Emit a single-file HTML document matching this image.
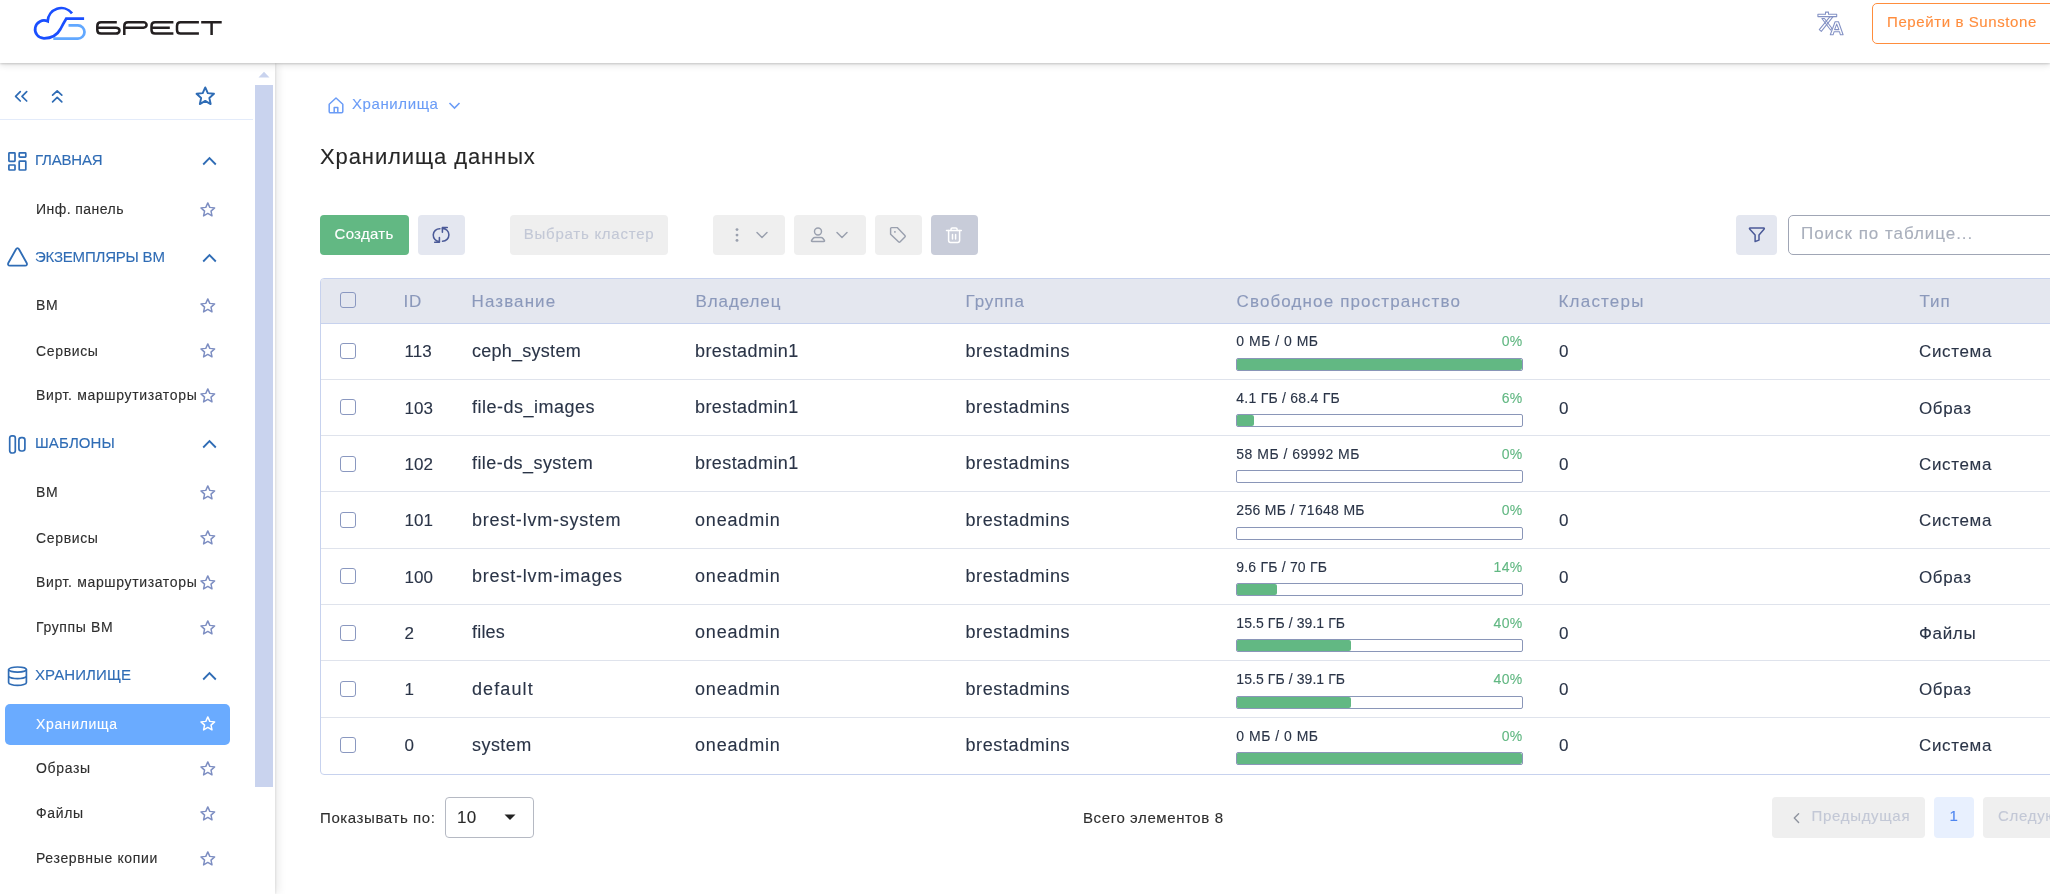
<!DOCTYPE html>
<html><head><meta charset="utf-8"><title>Хранилища данных</title>
<style>
html,body{margin:0;padding:0;}
body{width:2050px;height:894px;position:relative;overflow:hidden;background:#fff;font-family:"Liberation Sans", sans-serif;}
.t{position:absolute;white-space:pre;-webkit-text-stroke:0.12px currentColor;}
.r{position:absolute;}
</style></head><body>
<div id="w" style="position:absolute;left:0;top:0;width:2050px;height:894px;will-change:transform;">
<div class="r" style="left:0px;top:0px;width:2050px;height:63px;background:#fff;z-index:3;box-shadow:0 1px 2px rgba(0,0,0,0.16), 0 2px 7px rgba(0,0,0,0.12);"></div>
<svg class="r" style="left:30px;top:3px;z-index:4;" width="60" height="40" viewBox="0 0 60 40" fill="none"><path d="M38.5 22.4 H47.9 A6.6 6.6 0 0 1 47.9 35.6 H23.3" stroke="#62a8ff" stroke-width="2.7" fill="none"/><path d="M42 10.3 A13.6 13.6 0 0 0 17.7 18.3 A8.9 8.9 0 1 0 14 35.3 C22 35.3 27.5 31.5 30.5 26 C32.5 22 34.5 18.5 36.2 15.7 H54.1" stroke="#1a4fff" stroke-width="2.7" fill="none"/></svg>
<svg class="r" style="left:95px;top:20px;z-index:4;" width="128" height="16" viewBox="0 0 128 16" fill="none"><g stroke="#231f20" stroke-width="2.5" fill="none"><path d="M21.8 2.3 H6 C3.8 2.3 2.3 3.8 2.3 6 V10 C2.3 12.2 3.8 13.6 6 13.6 H21 C23 13.6 24.5 12.2 24.5 10.6 C24.5 9 23 7.7 21 7.7 H2.3"/><path d="M29.3 14.9 V6 C29.3 3.8 30.8 2.3 33 2.3 H48.5 C50.3 2.3 51.6 3.6 51.6 5 C51.6 6.4 50.3 7.7 48.5 7.7 H29.3"/><path d="M78.4 2.3 H60 C57.8 2.3 56.5 3.8 56.5 6 V10 C56.5 12.2 57.8 13.6 60 13.6 H78.4 M56.5 7.7 H74.8"/><path d="M103.9 2.3 H85.5 C83.3 2.3 82 3.8 82 6 V10 C82 12.2 83.3 13.6 85.5 13.6 H103.9"/><path d="M106.2 2.3 H126.7 M116.6 2.3 V14.9"/></g></svg>
<svg class="r" style="left:1812px;top:8px;z-index:4;" width="36" height="32" viewBox="0 0 36 32" fill="none"><g stroke="#8391c4" stroke-width="1.05" fill="none" stroke-linejoin="round"><path d="M5.9 6.2 H13.5 V4.1 H16.5 V6.2 H24.7 V8.6 H5.9 Z"/><path d="M18 8.6 H21.1 L9.3 23.4 L7.3 21.7 Z"/><path d="M9.9 10.5 H12.4 L19.9 20.2 L18.6 22 Z"/><path d="M18.3 26.8 L23.1 13.8 H26.5 L31.1 26.8 H28.4 L27.5 23.7 H22.1 L21.1 26.8 Z M22.6 21.6 H26.9 L24.7 16.1 Z"/></g></svg>
<div class="r" style="left:1872px;top:3px;width:190px;height:41px;border:1.5px solid #ff8d3d;border-radius:5px;box-sizing:border-box;background:#fff;z-index:4;"></div>
<div class="t" style="left:1887px;top:11.17px;font-size:15px;line-height:21px;color:#ff8d3d;letter-spacing:0.6px;font-weight:400;z-index:5;">Перейти в Sunstone</div>
<div class="r" style="left:0px;top:63px;width:275px;height:831px;background:#fff;z-index:2;box-shadow:1px 0 2px rgba(0,0,0,0.08), 3px 0 9px rgba(0,0,0,0.09);"></div>
<div class="r" style="left:255px;top:85px;width:18px;height:702px;background:#c9d3ee;z-index:2;"></div>
<svg class="r" style="left:258px;top:71px;z-index:2;" width="12" height="7" viewBox="0 0 12 7" fill="none"><path d="M0.5 6.5 L6 0.8 L11.5 6.5 Z" fill="#c9d3ee"/></svg>
<div class="r" style="left:0px;top:119px;width:253px;height:1px;background:#e3ebfa;z-index:2;"></div>
<svg class="r" style="left:10px;top:85px;z-index:2;" width="24" height="24" viewBox="0 0 24 24" fill="none"><path d="M10.3 6.6 L5.6 11.3 L10.3 16 M16.7 6.6 L12 11.3 L16.7 16" stroke="#2f6cb5" stroke-width="1.7" fill="none" stroke-linecap="round" stroke-linejoin="round"/></svg>
<svg class="r" style="left:45px;top:85px;z-index:2;" width="24" height="24" viewBox="0 0 24 24" fill="none"><path d="M7.6 10.2 L12.2 5.8 L16.8 10.2 M7.6 16.8 L12.2 12.3 L16.8 16.8" stroke="#2f6cb5" stroke-width="1.7" fill="none" stroke-linecap="round" stroke-linejoin="round"/></svg>
<svg class="r" style="left:194px;top:84.5px;z-index:2;" width="22.5" height="22.5" viewBox="0 0 24 24" fill="none"><path d="M12.00 2.60 L14.71 8.67 L21.32 9.37 L16.38 13.82 L17.76 20.33 L12.00 17.01 L6.24 20.33 L7.62 13.82 L2.68 9.37 L9.29 8.67 Z" stroke="#2f6cb5" stroke-width="2.05" stroke-linejoin="round" fill="none"/></svg>
<div class="t" style="left:35px;top:149.37px;font-size:15px;line-height:21px;color:#2f6cb5;letter-spacing:-0.2px;font-weight:400;z-index:2;">ГЛАВНАЯ</div>
<svg class="r" style="left:202px;top:156.2px;z-index:2;" width="15" height="10" viewBox="0 0 15 10" fill="none"><path d="M1.2 8.5 L7.5 2 L13.8 8.5" stroke="#2f6cb5" stroke-width="1.8" fill="none"/></svg>
<div class="t" style="left:35px;top:246.37px;font-size:15px;line-height:21px;color:#2f6cb5;letter-spacing:-0.2px;font-weight:400;z-index:2;">ЭКЗЕМПЛЯРЫ ВМ</div>
<svg class="r" style="left:202px;top:253.2px;z-index:2;" width="15" height="10" viewBox="0 0 15 10" fill="none"><path d="M1.2 8.5 L7.5 2 L13.8 8.5" stroke="#2f6cb5" stroke-width="1.8" fill="none"/></svg>
<div class="t" style="left:35px;top:432.07px;font-size:15px;line-height:21px;color:#2f6cb5;letter-spacing:0.1px;font-weight:400;z-index:2;">ШАБЛОНЫ</div>
<svg class="r" style="left:202px;top:438.9px;z-index:2;" width="15" height="10" viewBox="0 0 15 10" fill="none"><path d="M1.2 8.5 L7.5 2 L13.8 8.5" stroke="#2f6cb5" stroke-width="1.8" fill="none"/></svg>
<div class="t" style="left:35px;top:664.27px;font-size:15px;line-height:21px;color:#2f6cb5;letter-spacing:0.1px;font-weight:400;z-index:2;">ХРАНИЛИЩЕ</div>
<svg class="r" style="left:202px;top:671.1px;z-index:2;" width="15" height="10" viewBox="0 0 15 10" fill="none"><path d="M1.2 8.5 L7.5 2 L13.8 8.5" stroke="#2f6cb5" stroke-width="1.8" fill="none"/></svg>
<svg class="r" style="left:7px;top:151px;z-index:2;" width="21" height="21" viewBox="0 0 21 21" fill="none"><g stroke="#2f6cb5" stroke-width="1.7" fill="none"><rect x="1.9" y="1.9" width="6.1" height="8.5" rx="0.6"/><rect x="12.2" y="1.9" width="6.6" height="4.3" rx="0.6"/><rect x="1.9" y="14" width="6.1" height="5" rx="0.6"/><rect x="12.2" y="10.2" width="6.6" height="8.8" rx="0.6"/></g></svg>
<svg class="r" style="left:6px;top:246px;z-index:2;" width="23" height="22" viewBox="0 0 23 22" fill="none"><path d="M10 3.2 C10.8 1.8 12.2 1.8 13 3.2 L20.7 17 C21.5 18.5 20.8 19.7 19.1 19.7 L3.9 19.7 C2.2 19.7 1.5 18.5 2.3 17 Z" stroke="#2f6cb5" stroke-width="1.8" fill="none" stroke-linejoin="round"/></svg>
<svg class="r" style="left:7px;top:433px;z-index:2;" width="21" height="22" viewBox="0 0 21 22" fill="none"><g stroke="#2f6cb5" stroke-width="1.7" fill="none"><rect x="2.7" y="2.8" width="5.6" height="17.2" rx="2.2"/><rect x="11.9" y="4.7" width="6" height="13.3" rx="2.4"/></g></svg>
<svg class="r" style="left:7px;top:665px;z-index:2;" width="21" height="22" viewBox="0 0 21 22" fill="none"><g stroke="#2f6cb5" stroke-width="1.7" fill="none"><ellipse cx="10.5" cy="4.6" rx="8.9" ry="2.6"/><path d="M1.6 4.6 V17.4 C1.6 19 5.6 20.4 10.5 20.4 C15.4 20.4 19.4 19 19.4 17.4 V4.6"/><path d="M1.6 11.6 C3 12.7 6.5 13.6 10.5 13.6 C14.5 13.6 18 12.7 19.4 11.6"/></g></svg>
<div class="t" style="left:36px;top:199.06px;font-size:14px;line-height:20px;color:#2e2e2e;letter-spacing:0.45px;font-weight:400;z-index:2;">Инф. панель</div>
<svg class="r" style="left:199.2px;top:200.70000000000002px;z-index:2;" width="17.6" height="17.6" viewBox="0 0 24 24" fill="none"><path d="M12.00 2.60 L14.71 8.67 L21.32 9.37 L16.38 13.82 L17.76 20.33 L12.00 17.01 L6.24 20.33 L7.62 13.82 L2.68 9.37 L9.29 8.67 Z" stroke="#7d8ec2" stroke-width="2.0" stroke-linejoin="round" fill="none"/></svg>
<div class="t" style="left:36px;top:295.36px;font-size:14px;line-height:20px;color:#2e2e2e;letter-spacing:0.65px;font-weight:400;z-index:2;">ВМ</div>
<svg class="r" style="left:199.2px;top:297.0px;z-index:2;" width="17.6" height="17.6" viewBox="0 0 24 24" fill="none"><path d="M12.00 2.60 L14.71 8.67 L21.32 9.37 L16.38 13.82 L17.76 20.33 L12.00 17.01 L6.24 20.33 L7.62 13.82 L2.68 9.37 L9.29 8.67 Z" stroke="#7d8ec2" stroke-width="2.0" stroke-linejoin="round" fill="none"/></svg>
<div class="t" style="left:36px;top:340.56px;font-size:14px;line-height:20px;color:#2e2e2e;letter-spacing:0.65px;font-weight:400;z-index:2;">Сервисы</div>
<svg class="r" style="left:199.2px;top:342.2px;z-index:2;" width="17.6" height="17.6" viewBox="0 0 24 24" fill="none"><path d="M12.00 2.60 L14.71 8.67 L21.32 9.37 L16.38 13.82 L17.76 20.33 L12.00 17.01 L6.24 20.33 L7.62 13.82 L2.68 9.37 L9.29 8.67 Z" stroke="#7d8ec2" stroke-width="2.0" stroke-linejoin="round" fill="none"/></svg>
<div class="t" style="left:36px;top:385.36px;font-size:14px;line-height:20px;color:#2e2e2e;letter-spacing:0.65px;font-weight:400;z-index:2;">Вирт. маршрутизаторы</div>
<svg class="r" style="left:199.2px;top:387.0px;z-index:2;" width="17.6" height="17.6" viewBox="0 0 24 24" fill="none"><path d="M12.00 2.60 L14.71 8.67 L21.32 9.37 L16.38 13.82 L17.76 20.33 L12.00 17.01 L6.24 20.33 L7.62 13.82 L2.68 9.37 L9.29 8.67 Z" stroke="#7d8ec2" stroke-width="2.0" stroke-linejoin="round" fill="none"/></svg>
<div class="t" style="left:36px;top:482.36px;font-size:14px;line-height:20px;color:#2e2e2e;letter-spacing:0.65px;font-weight:400;z-index:2;">ВМ</div>
<svg class="r" style="left:199.2px;top:484.0px;z-index:2;" width="17.6" height="17.6" viewBox="0 0 24 24" fill="none"><path d="M12.00 2.60 L14.71 8.67 L21.32 9.37 L16.38 13.82 L17.76 20.33 L12.00 17.01 L6.24 20.33 L7.62 13.82 L2.68 9.37 L9.29 8.67 Z" stroke="#7d8ec2" stroke-width="2.0" stroke-linejoin="round" fill="none"/></svg>
<div class="t" style="left:36px;top:527.56px;font-size:14px;line-height:20px;color:#2e2e2e;letter-spacing:0.65px;font-weight:400;z-index:2;">Сервисы</div>
<svg class="r" style="left:199.2px;top:529.1999999999999px;z-index:2;" width="17.6" height="17.6" viewBox="0 0 24 24" fill="none"><path d="M12.00 2.60 L14.71 8.67 L21.32 9.37 L16.38 13.82 L17.76 20.33 L12.00 17.01 L6.24 20.33 L7.62 13.82 L2.68 9.37 L9.29 8.67 Z" stroke="#7d8ec2" stroke-width="2.0" stroke-linejoin="round" fill="none"/></svg>
<div class="t" style="left:36px;top:572.46px;font-size:14px;line-height:20px;color:#2e2e2e;letter-spacing:0.65px;font-weight:400;z-index:2;">Вирт. маршрутизаторы</div>
<svg class="r" style="left:199.2px;top:574.0999999999999px;z-index:2;" width="17.6" height="17.6" viewBox="0 0 24 24" fill="none"><path d="M12.00 2.60 L14.71 8.67 L21.32 9.37 L16.38 13.82 L17.76 20.33 L12.00 17.01 L6.24 20.33 L7.62 13.82 L2.68 9.37 L9.29 8.67 Z" stroke="#7d8ec2" stroke-width="2.0" stroke-linejoin="round" fill="none"/></svg>
<div class="t" style="left:36px;top:616.96px;font-size:14px;line-height:20px;color:#2e2e2e;letter-spacing:0.65px;font-weight:400;z-index:2;">Группы ВМ</div>
<svg class="r" style="left:199.2px;top:618.5999999999999px;z-index:2;" width="17.6" height="17.6" viewBox="0 0 24 24" fill="none"><path d="M12.00 2.60 L14.71 8.67 L21.32 9.37 L16.38 13.82 L17.76 20.33 L12.00 17.01 L6.24 20.33 L7.62 13.82 L2.68 9.37 L9.29 8.67 Z" stroke="#7d8ec2" stroke-width="2.0" stroke-linejoin="round" fill="none"/></svg>
<div class="r" style="left:5px;top:704px;width:225px;height:41px;background:#6aabff;border-radius:5px;z-index:2;"></div>
<div class="t" style="left:36px;top:713.66px;font-size:14px;line-height:20px;color:#fff;letter-spacing:0.65px;font-weight:400;z-index:2;">Хранилища</div>
<svg class="r" style="left:199.2px;top:715.3px;z-index:2;" width="17.6" height="17.6" viewBox="0 0 24 24" fill="none"><path d="M12.00 2.60 L14.71 8.67 L21.32 9.37 L16.38 13.82 L17.76 20.33 L12.00 17.01 L6.24 20.33 L7.62 13.82 L2.68 9.37 L9.29 8.67 Z" stroke="#fff" stroke-width="2.0" stroke-linejoin="round" fill="none"/></svg>
<div class="t" style="left:36px;top:758.36px;font-size:14px;line-height:20px;color:#2e2e2e;letter-spacing:0.65px;font-weight:400;z-index:2;">Образы</div>
<svg class="r" style="left:199.2px;top:760.0px;z-index:2;" width="17.6" height="17.6" viewBox="0 0 24 24" fill="none"><path d="M12.00 2.60 L14.71 8.67 L21.32 9.37 L16.38 13.82 L17.76 20.33 L12.00 17.01 L6.24 20.33 L7.62 13.82 L2.68 9.37 L9.29 8.67 Z" stroke="#7d8ec2" stroke-width="2.0" stroke-linejoin="round" fill="none"/></svg>
<div class="t" style="left:36px;top:803.36px;font-size:14px;line-height:20px;color:#2e2e2e;letter-spacing:0.65px;font-weight:400;z-index:2;">Файлы</div>
<svg class="r" style="left:199.2px;top:805.0px;z-index:2;" width="17.6" height="17.6" viewBox="0 0 24 24" fill="none"><path d="M12.00 2.60 L14.71 8.67 L21.32 9.37 L16.38 13.82 L17.76 20.33 L12.00 17.01 L6.24 20.33 L7.62 13.82 L2.68 9.37 L9.29 8.67 Z" stroke="#7d8ec2" stroke-width="2.0" stroke-linejoin="round" fill="none"/></svg>
<div class="t" style="left:36px;top:848.36px;font-size:14px;line-height:20px;color:#2e2e2e;letter-spacing:0.65px;font-weight:400;z-index:2;">Резервные копии</div>
<svg class="r" style="left:199.2px;top:850.0px;z-index:2;" width="17.6" height="17.6" viewBox="0 0 24 24" fill="none"><path d="M12.00 2.60 L14.71 8.67 L21.32 9.37 L16.38 13.82 L17.76 20.33 L12.00 17.01 L6.24 20.33 L7.62 13.82 L2.68 9.37 L9.29 8.67 Z" stroke="#7d8ec2" stroke-width="2.0" stroke-linejoin="round" fill="none"/></svg>
<svg class="r" style="left:326px;top:95px;" width="20" height="20" viewBox="0 0 20 20" fill="none"><path d="M3.2 9.2 L10 3 L16.8 9.2 V16.6 C16.8 17.3 16.3 17.8 15.6 17.8 H4.4 C3.7 17.8 3.2 17.3 3.2 16.6 Z M8.2 17.8 V12.5 H11.8 V17.8" stroke="#6b9cf6" stroke-width="1.5" fill="none" stroke-linejoin="round"/></svg>
<div class="t" style="left:352px;top:93.17px;font-size:15px;line-height:21px;color:#6b9cf6;letter-spacing:0.6px;font-weight:400;">Хранилища</div>
<svg class="r" style="left:448px;top:101px;" width="13" height="9" viewBox="0 0 13 9" fill="none"><path d="M1.5 2 L6.5 7 L11.5 2" stroke="#6b9cf6" stroke-width="1.6" fill="none"/></svg>
<div class="t" style="left:320px;top:141.25px;font-size:22px;line-height:31px;color:#262626;letter-spacing:0.9px;font-weight:400;">Хранилища данных</div>
<div class="r" style="left:320px;top:215px;width:89px;height:40px;background:#62b883;border-radius:4px;"></div>
<div class="t" style="left:334.5px;top:223.27px;font-size:15px;line-height:21px;color:#fff;letter-spacing:0.3px;font-weight:400;">Создать</div>
<div class="r" style="left:418px;top:215px;width:47px;height:40px;background:#e4e7f0;border-radius:4px;"></div>
<svg class="r" style="left:429px;top:222px;" width="24" height="24" viewBox="0 0 24 24" fill="none"><g stroke="#4b5a98" stroke-width="1.55" fill="none" stroke-linecap="round" stroke-linejoin="round"><path d="M10.9 6.7 A6.3 6.3 0 0 0 10.4 19.5"/><path d="M10.4 15.6 V20.3 H5.7"/><path d="M13.5 19.3 A6.3 6.3 0 0 0 13.4 6.4"/><path d="M13.4 10.2 V5.4 H18.3"/></g></svg>
<div class="r" style="left:510px;top:215px;width:158px;height:40px;background:#efefef;border-radius:4px;"></div>
<div class="t" style="left:523.8px;top:223.27px;font-size:15px;line-height:21px;color:#c3c8d6;letter-spacing:0.75px;font-weight:400;">Выбрать кластер</div>
<div class="r" style="left:713px;top:215px;width:72px;height:40px;background:#efefef;border-radius:4px;"></div>
<svg class="r" style="left:731px;top:225px;" width="12" height="20" viewBox="0 0 12 20" fill="none"><g fill="#9aa0ae"><circle cx="6" cy="4.6" r="1.45"/><circle cx="6" cy="10.1" r="1.45"/><circle cx="6" cy="15.4" r="1.45"/></g></svg>
<svg class="r" style="left:755px;top:228.8px;" width="14" height="12" viewBox="0 0 14 12" fill="none"><path d="M2 3.5 L7 8.5 L12 3.5" stroke="#9aa0ae" stroke-width="1.5" fill="none" stroke-linecap="round" stroke-linejoin="round"/></svg>
<div class="r" style="left:794px;top:215px;width:72px;height:40px;background:#efefef;border-radius:4px;"></div>
<svg class="r" style="left:808px;top:225px;" width="18" height="20" viewBox="0 0 18 20" fill="none"><g stroke="#9aa0ae" stroke-width="1.45" fill="none"><circle cx="10" cy="6.4" r="3.5"/><path d="M6.9 12.5 H13.1 C13.9 12.5 14.5 12.9 15 13.5 L16.3 15.2 C16.8 15.9 16.5 16.5 15.7 16.5 H4.3 C3.5 16.5 3.2 15.9 3.7 15.2 L5 13.5 C5.5 12.9 6.1 12.5 6.9 12.5 Z" stroke-linejoin="round"/></g></svg>
<svg class="r" style="left:835px;top:228.8px;" width="14" height="12" viewBox="0 0 14 12" fill="none"><path d="M2 3.5 L7 8.5 L12 3.5" stroke="#9aa0ae" stroke-width="1.5" fill="none" stroke-linecap="round" stroke-linejoin="round"/></svg>
<div class="r" style="left:875px;top:215px;width:47px;height:40px;background:#efefef;border-radius:4px;"></div>
<svg class="r" style="left:886px;top:224px;" width="22" height="22" viewBox="0 0 22 22" fill="none"><g stroke="#9aa0ae" stroke-width="1.45" fill="none" stroke-linejoin="round"><path d="M4.6 4.6 C4.6 4 5 3.6 5.6 3.6 H11.2 L18.9 11.4 C19.4 11.9 19.4 12.6 18.9 13.1 L14.2 17.8 C13.7 18.3 13 18.3 12.5 17.8 L4.6 10.2 Z"/></g><rect x="8.1" y="7.1" width="1.6" height="1.6" fill="#9aa0ae"/></svg>
<div class="r" style="left:931px;top:215px;width:47px;height:40px;background:#c8ccd9;border-radius:4px;"></div>
<svg class="r" style="left:943px;top:224px;" width="22" height="22" viewBox="0 0 22 22" fill="none"><g stroke="#fff" stroke-width="1.5" fill="none" stroke-linecap="round" stroke-linejoin="round"><path d="M3.5 6.4 H18.3"/><path d="M8 6.4 V5.2 C8 4.4 8.5 3.9 9.3 3.9 H12.8 C13.6 3.9 14.1 4.4 14.1 5.2 V6.4"/><path d="M5.6 6.6 V16.6 C5.6 17.7 6.3 18.4 7.4 18.4 H14.8 C15.9 18.4 16.6 17.7 16.6 16.6 V6.6"/><path d="M9.5 10.4 V14.9 M12.6 10.4 V14.9"/></g></svg>
<div class="r" style="left:1736px;top:215px;width:41px;height:40px;background:#e4e7f0;border-radius:4px;"></div>
<svg class="r" style="left:1746px;top:225px;" width="20" height="20" viewBox="0 0 20 20" fill="none"><path d="M4 3 H17.8 C18.3 3 18.5 3.5 18.2 3.9 L13 10.1 V15.1 L9.1 16.5 V10.1 L3.6 3.9 C3.3 3.5 3.5 3 4 3 Z" stroke="#4b5a98" stroke-width="1.5" fill="none" stroke-linejoin="round"/></svg>
<div class="r" style="left:1788px;top:215px;width:300px;height:40px;border:1px solid #a0a6b5;border-radius:5px;box-sizing:border-box;background:#fff;"></div>
<div class="t" style="left:1801px;top:221.70px;font-size:17px;line-height:24px;color:#a9afbc;letter-spacing:0.97px;font-weight:400;">Поиск по таблице...</div>
<div class="r" style="left:320px;top:278px;width:1800px;height:497px;border:1px solid #c7d2ee;border-radius:4px;box-sizing:border-box;background:#fff;"></div>
<div class="r" style="left:321px;top:279px;width:1800px;height:44px;background:#e4e7ef;border-bottom:1px solid #c7d2ee;border-top-left-radius:3px;"></div>
<div class="r" style="left:340px;top:292px;width:16px;height:16px;border:1.6px solid #8a98c0;border-radius:3px;box-sizing:border-box;"></div>
<div class="t" style="left:403.5px;top:289.70px;font-size:17px;line-height:24px;color:#8b99bb;letter-spacing:0.9px;font-weight:400;">ID</div>
<div class="t" style="left:471.5px;top:289.70px;font-size:17px;line-height:24px;color:#8b99bb;letter-spacing:1.1px;font-weight:400;">Название</div>
<div class="t" style="left:695.5px;top:289.70px;font-size:17px;line-height:24px;color:#8b99bb;letter-spacing:0.9px;font-weight:400;">Владелец</div>
<div class="t" style="left:965.5px;top:289.70px;font-size:17px;line-height:24px;color:#8b99bb;letter-spacing:0.9px;font-weight:400;">Группа</div>
<div class="t" style="left:1236.5px;top:289.70px;font-size:17px;line-height:24px;color:#8b99bb;letter-spacing:1.13px;font-weight:400;">Свободное пространство</div>
<div class="t" style="left:1558.5px;top:289.70px;font-size:17px;line-height:24px;color:#8b99bb;letter-spacing:1.2px;font-weight:400;">Кластеры</div>
<div class="t" style="left:1919.5px;top:289.70px;font-size:17px;line-height:24px;color:#8b99bb;letter-spacing:0.9px;font-weight:400;">Тип</div>
<div class="r" style="left:321px;top:379px;width:1800px;height:1px;background:#dfe3ec;"></div>
<div class="r" style="left:340px;top:343px;width:16px;height:16px;border:1.6px solid #8a98c0;border-radius:3px;box-sizing:border-box;"></div>
<div class="t" style="left:404.5px;top:340.35px;font-size:17px;line-height:24px;color:#2a3447;letter-spacing:0.1px;font-weight:400;">113</div>
<div class="t" style="left:472px;top:338.86px;font-size:18px;line-height:25px;color:#2a3447;letter-spacing:0.26px;font-weight:400;">ceph_system</div>
<div class="t" style="left:695px;top:338.86px;font-size:18px;line-height:25px;color:#2a3447;letter-spacing:0.42px;font-weight:400;">brestadmin1</div>
<div class="t" style="left:965.5px;top:338.86px;font-size:18px;line-height:25px;color:#2a3447;letter-spacing:0.6px;font-weight:400;">brestadmins</div>
<div class="t" style="left:1559px;top:340.35px;font-size:17px;line-height:24px;color:#2a3447;letter-spacing:0px;font-weight:400;">0</div>
<div class="t" style="left:1919px;top:340.35px;font-size:17px;line-height:24px;color:#2a3447;letter-spacing:0.65px;font-weight:400;">Система</div>
<div class="t" style="left:1236.3px;top:331.46px;font-size:14px;line-height:20px;color:#2a3447;letter-spacing:0.5px;font-weight:400;">0 МБ / 0 МБ</div>
<div class="t" style="right:527.5px;top:331.46px;font-size:14px;line-height:20px;color:#62b883;letter-spacing:0.3px;font-weight:400;">0%</div>
<div class="r" style="left:1236px;top:358px;width:287px;height:13px;border:1px solid #8a96b8;border-radius:2px;box-sizing:border-box;background:#fff;overflow:hidden;"></div>
<div class="r" style="left:1237px;top:359px;width:285px;height:11px;background:#62b883;border-radius:1px 2px 2px 1px;"></div>
<div class="r" style="left:321px;top:435px;width:1800px;height:1px;background:#dfe3ec;"></div>
<div class="r" style="left:340px;top:399px;width:16px;height:16px;border:1.6px solid #8a98c0;border-radius:3px;box-sizing:border-box;"></div>
<div class="t" style="left:404.5px;top:396.65px;font-size:17px;line-height:24px;color:#2a3447;letter-spacing:0.1px;font-weight:400;">103</div>
<div class="t" style="left:472px;top:395.16px;font-size:18px;line-height:25px;color:#2a3447;letter-spacing:0.5px;font-weight:400;">file-ds_images</div>
<div class="t" style="left:695px;top:395.16px;font-size:18px;line-height:25px;color:#2a3447;letter-spacing:0.42px;font-weight:400;">brestadmin1</div>
<div class="t" style="left:965.5px;top:395.16px;font-size:18px;line-height:25px;color:#2a3447;letter-spacing:0.6px;font-weight:400;">brestadmins</div>
<div class="t" style="left:1559px;top:396.65px;font-size:17px;line-height:24px;color:#2a3447;letter-spacing:0px;font-weight:400;">0</div>
<div class="t" style="left:1919px;top:396.65px;font-size:17px;line-height:24px;color:#2a3447;letter-spacing:0.65px;font-weight:400;">Образ</div>
<div class="t" style="left:1236.3px;top:387.76px;font-size:14px;line-height:20px;color:#2a3447;letter-spacing:0.25px;font-weight:400;">4.1 ГБ / 68.4 ГБ</div>
<div class="t" style="right:527.5px;top:387.76px;font-size:14px;line-height:20px;color:#62b883;letter-spacing:0.3px;font-weight:400;">6%</div>
<div class="r" style="left:1236px;top:414px;width:287px;height:13px;border:1px solid #8a96b8;border-radius:2px;box-sizing:border-box;background:#fff;overflow:hidden;"></div>
<div class="r" style="left:1237px;top:415px;width:17px;height:11px;background:#62b883;border-radius:1px 2px 2px 1px;"></div>
<div class="r" style="left:321px;top:491px;width:1800px;height:1px;background:#dfe3ec;"></div>
<div class="r" style="left:340px;top:456px;width:16px;height:16px;border:1.6px solid #8a98c0;border-radius:3px;box-sizing:border-box;"></div>
<div class="t" style="left:404.5px;top:452.95px;font-size:17px;line-height:24px;color:#2a3447;letter-spacing:0.1px;font-weight:400;">102</div>
<div class="t" style="left:472px;top:451.46px;font-size:18px;line-height:25px;color:#2a3447;letter-spacing:0.43px;font-weight:400;">file-ds_system</div>
<div class="t" style="left:695px;top:451.46px;font-size:18px;line-height:25px;color:#2a3447;letter-spacing:0.42px;font-weight:400;">brestadmin1</div>
<div class="t" style="left:965.5px;top:451.46px;font-size:18px;line-height:25px;color:#2a3447;letter-spacing:0.6px;font-weight:400;">brestadmins</div>
<div class="t" style="left:1559px;top:452.95px;font-size:17px;line-height:24px;color:#2a3447;letter-spacing:0px;font-weight:400;">0</div>
<div class="t" style="left:1919px;top:452.95px;font-size:17px;line-height:24px;color:#2a3447;letter-spacing:0.65px;font-weight:400;">Система</div>
<div class="t" style="left:1236.3px;top:444.06px;font-size:14px;line-height:20px;color:#2a3447;letter-spacing:0.5px;font-weight:400;">58 МБ / 69992 МБ</div>
<div class="t" style="right:527.5px;top:444.06px;font-size:14px;line-height:20px;color:#62b883;letter-spacing:0.3px;font-weight:400;">0%</div>
<div class="r" style="left:1236px;top:470px;width:287px;height:13px;border:1px solid #8a96b8;border-radius:2px;box-sizing:border-box;background:#fff;overflow:hidden;"></div>
<div class="r" style="left:321px;top:548px;width:1800px;height:1px;background:#dfe3ec;"></div>
<div class="r" style="left:340px;top:512px;width:16px;height:16px;border:1.6px solid #8a98c0;border-radius:3px;box-sizing:border-box;"></div>
<div class="t" style="left:404.5px;top:509.25px;font-size:17px;line-height:24px;color:#2a3447;letter-spacing:0.1px;font-weight:400;">101</div>
<div class="t" style="left:472px;top:507.76px;font-size:18px;line-height:25px;color:#2a3447;letter-spacing:0.77px;font-weight:400;">brest-lvm-system</div>
<div class="t" style="left:695px;top:507.76px;font-size:18px;line-height:25px;color:#2a3447;letter-spacing:0.83px;font-weight:400;">oneadmin</div>
<div class="t" style="left:965.5px;top:507.76px;font-size:18px;line-height:25px;color:#2a3447;letter-spacing:0.6px;font-weight:400;">brestadmins</div>
<div class="t" style="left:1559px;top:509.25px;font-size:17px;line-height:24px;color:#2a3447;letter-spacing:0px;font-weight:400;">0</div>
<div class="t" style="left:1919px;top:509.25px;font-size:17px;line-height:24px;color:#2a3447;letter-spacing:0.65px;font-weight:400;">Система</div>
<div class="t" style="left:1236.3px;top:500.36px;font-size:14px;line-height:20px;color:#2a3447;letter-spacing:0.3px;font-weight:400;">256 МБ / 71648 МБ</div>
<div class="t" style="right:527.5px;top:500.36px;font-size:14px;line-height:20px;color:#62b883;letter-spacing:0.3px;font-weight:400;">0%</div>
<div class="r" style="left:1236px;top:527px;width:287px;height:13px;border:1px solid #8a96b8;border-radius:2px;box-sizing:border-box;background:#fff;overflow:hidden;"></div>
<div class="r" style="left:321px;top:604px;width:1800px;height:1px;background:#dfe3ec;"></div>
<div class="r" style="left:340px;top:568px;width:16px;height:16px;border:1.6px solid #8a98c0;border-radius:3px;box-sizing:border-box;"></div>
<div class="t" style="left:404.5px;top:565.55px;font-size:17px;line-height:24px;color:#2a3447;letter-spacing:0.1px;font-weight:400;">100</div>
<div class="t" style="left:472px;top:564.06px;font-size:18px;line-height:25px;color:#2a3447;letter-spacing:0.8px;font-weight:400;">brest-lvm-images</div>
<div class="t" style="left:695px;top:564.06px;font-size:18px;line-height:25px;color:#2a3447;letter-spacing:0.83px;font-weight:400;">oneadmin</div>
<div class="t" style="left:965.5px;top:564.06px;font-size:18px;line-height:25px;color:#2a3447;letter-spacing:0.6px;font-weight:400;">brestadmins</div>
<div class="t" style="left:1559px;top:565.55px;font-size:17px;line-height:24px;color:#2a3447;letter-spacing:0px;font-weight:400;">0</div>
<div class="t" style="left:1919px;top:565.55px;font-size:17px;line-height:24px;color:#2a3447;letter-spacing:0.65px;font-weight:400;">Образ</div>
<div class="t" style="left:1236.3px;top:556.66px;font-size:14px;line-height:20px;color:#2a3447;letter-spacing:0.2px;font-weight:400;">9.6 ГБ / 70 ГБ</div>
<div class="t" style="right:527.5px;top:556.66px;font-size:14px;line-height:20px;color:#62b883;letter-spacing:0.3px;font-weight:400;">14%</div>
<div class="r" style="left:1236px;top:583px;width:287px;height:13px;border:1px solid #8a96b8;border-radius:2px;box-sizing:border-box;background:#fff;overflow:hidden;"></div>
<div class="r" style="left:1237px;top:584px;width:40px;height:11px;background:#62b883;border-radius:1px 2px 2px 1px;"></div>
<div class="r" style="left:321px;top:660px;width:1800px;height:1px;background:#dfe3ec;"></div>
<div class="r" style="left:340px;top:625px;width:16px;height:16px;border:1.6px solid #8a98c0;border-radius:3px;box-sizing:border-box;"></div>
<div class="t" style="left:404.5px;top:621.85px;font-size:17px;line-height:24px;color:#2a3447;letter-spacing:0.1px;font-weight:400;">2</div>
<div class="t" style="left:472px;top:620.36px;font-size:18px;line-height:25px;color:#2a3447;letter-spacing:0.2px;font-weight:400;">files</div>
<div class="t" style="left:695px;top:620.36px;font-size:18px;line-height:25px;color:#2a3447;letter-spacing:0.83px;font-weight:400;">oneadmin</div>
<div class="t" style="left:965.5px;top:620.36px;font-size:18px;line-height:25px;color:#2a3447;letter-spacing:0.6px;font-weight:400;">brestadmins</div>
<div class="t" style="left:1559px;top:621.85px;font-size:17px;line-height:24px;color:#2a3447;letter-spacing:0px;font-weight:400;">0</div>
<div class="t" style="left:1919px;top:621.85px;font-size:17px;line-height:24px;color:#2a3447;letter-spacing:0.65px;font-weight:400;">Файлы</div>
<div class="t" style="left:1236.3px;top:612.96px;font-size:14px;line-height:20px;color:#2a3447;letter-spacing:0.08px;font-weight:400;">15.5 ГБ / 39.1 ГБ</div>
<div class="t" style="right:527.5px;top:612.96px;font-size:14px;line-height:20px;color:#62b883;letter-spacing:0.3px;font-weight:400;">40%</div>
<div class="r" style="left:1236px;top:639px;width:287px;height:13px;border:1px solid #8a96b8;border-radius:2px;box-sizing:border-box;background:#fff;overflow:hidden;"></div>
<div class="r" style="left:1237px;top:640px;width:114px;height:11px;background:#62b883;border-radius:1px 2px 2px 1px;"></div>
<div class="r" style="left:321px;top:717px;width:1800px;height:1px;background:#dfe3ec;"></div>
<div class="r" style="left:340px;top:681px;width:16px;height:16px;border:1.6px solid #8a98c0;border-radius:3px;box-sizing:border-box;"></div>
<div class="t" style="left:404.5px;top:678.15px;font-size:17px;line-height:24px;color:#2a3447;letter-spacing:0.1px;font-weight:400;">1</div>
<div class="t" style="left:472px;top:676.66px;font-size:18px;line-height:25px;color:#2a3447;letter-spacing:1.1px;font-weight:400;">default</div>
<div class="t" style="left:695px;top:676.66px;font-size:18px;line-height:25px;color:#2a3447;letter-spacing:0.83px;font-weight:400;">oneadmin</div>
<div class="t" style="left:965.5px;top:676.66px;font-size:18px;line-height:25px;color:#2a3447;letter-spacing:0.6px;font-weight:400;">brestadmins</div>
<div class="t" style="left:1559px;top:678.15px;font-size:17px;line-height:24px;color:#2a3447;letter-spacing:0px;font-weight:400;">0</div>
<div class="t" style="left:1919px;top:678.15px;font-size:17px;line-height:24px;color:#2a3447;letter-spacing:0.65px;font-weight:400;">Образ</div>
<div class="t" style="left:1236.3px;top:669.26px;font-size:14px;line-height:20px;color:#2a3447;letter-spacing:0.08px;font-weight:400;">15.5 ГБ / 39.1 ГБ</div>
<div class="t" style="right:527.5px;top:669.26px;font-size:14px;line-height:20px;color:#62b883;letter-spacing:0.3px;font-weight:400;">40%</div>
<div class="r" style="left:1236px;top:696px;width:287px;height:13px;border:1px solid #8a96b8;border-radius:2px;box-sizing:border-box;background:#fff;overflow:hidden;"></div>
<div class="r" style="left:1237px;top:697px;width:114px;height:11px;background:#62b883;border-radius:1px 2px 2px 1px;"></div>
<div class="r" style="left:340px;top:737px;width:16px;height:16px;border:1.6px solid #8a98c0;border-radius:3px;box-sizing:border-box;"></div>
<div class="t" style="left:404.5px;top:734.45px;font-size:17px;line-height:24px;color:#2a3447;letter-spacing:0.1px;font-weight:400;">0</div>
<div class="t" style="left:472px;top:732.96px;font-size:18px;line-height:25px;color:#2a3447;letter-spacing:0.44px;font-weight:400;">system</div>
<div class="t" style="left:695px;top:732.96px;font-size:18px;line-height:25px;color:#2a3447;letter-spacing:0.83px;font-weight:400;">oneadmin</div>
<div class="t" style="left:965.5px;top:732.96px;font-size:18px;line-height:25px;color:#2a3447;letter-spacing:0.6px;font-weight:400;">brestadmins</div>
<div class="t" style="left:1559px;top:734.45px;font-size:17px;line-height:24px;color:#2a3447;letter-spacing:0px;font-weight:400;">0</div>
<div class="t" style="left:1919px;top:734.45px;font-size:17px;line-height:24px;color:#2a3447;letter-spacing:0.65px;font-weight:400;">Система</div>
<div class="t" style="left:1236.3px;top:725.56px;font-size:14px;line-height:20px;color:#2a3447;letter-spacing:0.5px;font-weight:400;">0 МБ / 0 МБ</div>
<div class="t" style="right:527.5px;top:725.56px;font-size:14px;line-height:20px;color:#62b883;letter-spacing:0.3px;font-weight:400;">0%</div>
<div class="r" style="left:1236px;top:752px;width:287px;height:13px;border:1px solid #8a96b8;border-radius:2px;box-sizing:border-box;background:#fff;overflow:hidden;"></div>
<div class="r" style="left:1237px;top:753px;width:285px;height:11px;background:#62b883;border-radius:1px 2px 2px 1px;"></div>
<div class="t" style="left:320px;top:806.97px;font-size:15px;line-height:21px;color:#2e2e2e;letter-spacing:0.6px;font-weight:400;">Показывать по:</div>
<div class="r" style="left:445px;top:797px;width:89px;height:41px;border:1px solid #b5b9c3;border-radius:4px;box-sizing:border-box;"></div>
<div class="t" style="left:457px;top:805.70px;font-size:17px;line-height:24px;color:#2a2a2a;letter-spacing:0.3px;font-weight:400;">10</div>
<svg class="r" style="left:503px;top:813px;" width="14" height="8" viewBox="0 0 14 8" fill="none"><path d="M1.5 1.5 H12.5 L7 7 Z" fill="#222"/></svg>
<div class="t" style="left:1083px;top:806.97px;font-size:15px;line-height:21px;color:#2e2e2e;letter-spacing:0.6px;font-weight:400;">Всего элементов 8</div>
<div class="r" style="left:1772px;top:797px;width:153px;height:41px;background:#efefef;border-radius:4px;"></div>
<svg class="r" style="left:1790px;top:810px;" width="12" height="16" viewBox="0 0 12 16" fill="none"><path d="M8.6 3.8 L4.3 8.1 L8.6 12.4" stroke="#8e939e" stroke-width="1.4" fill="none" stroke-linecap="round" stroke-linejoin="round"/></svg>
<div class="t" style="left:1811.5px;top:804.87px;font-size:15px;line-height:21px;color:#c3c8d6;letter-spacing:0.7px;font-weight:400;">Предыдущая</div>
<div class="r" style="left:1934px;top:797px;width:40px;height:41px;background:#e8f0fe;border-radius:4px;"></div>
<div class="t" style="left:1949.5px;top:804.87px;font-size:15px;line-height:21px;color:#4f86f0;letter-spacing:0px;font-weight:400;">1</div>
<div class="r" style="left:1983px;top:797px;width:150px;height:41px;background:#efefef;border-radius:4px;"></div>
<div class="t" style="left:1998px;top:804.87px;font-size:15px;line-height:21px;color:#c3c8d6;letter-spacing:0.7px;font-weight:400;">Следующая</div>
</div>
</body></html>
